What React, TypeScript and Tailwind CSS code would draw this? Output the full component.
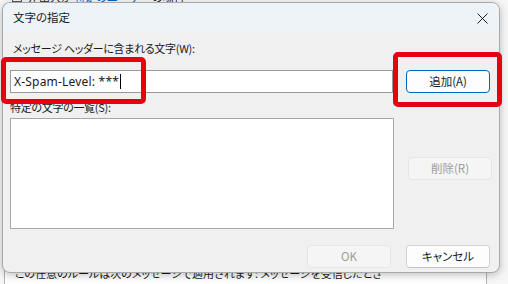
import React from 'react';

const font = "font-['Noto_Sans_CJK_JP','Noto_Sans',sans-serif] [font-feature-settings:'palt']";

const Button = ({ label, kind = 'normal' }: { label: string; kind?: 'normal' | 'default' | 'disabled' }) => {
    const look =
        kind === 'default'
            ? 'bg-[#fdfdfd] border-[#0067c0] text-[#1a1a1a]'
            : kind === 'disabled'
            ? 'bg-[#f5f5f5] border-[#e6e6e6] text-[#9d9d9d]'
            : 'bg-[#fdfdfd] border-[#d4d4d4] border-b-[#c2c2c2] text-[#1a1a1a]';
    return (
        <div className={`w-[84px] h-[23px] flex items-center justify-center rounded-[4px] border text-[11.5px] ${look}`}>
            {label}
        </div>
    );
};

const App = () => {
    return (
        <div className={`relative w-[508px] h-[284px] overflow-hidden bg-[#f7f7f7] ${font}`}>
            {/* window behind the dialog */}
            <div className="absolute inset-0 flex flex-col">
                <div className="h-[4px] overflow-hidden relative">
                    <div className="absolute -top-[10px] left-[12px] flex items-center gap-[6px] text-[11px] text-[#1a1a1a] leading-[14px]">
                        <span className="w-[10px] h-[10px] border border-[#555]" />
                        <span>差出人が <span className="text-[#0066cc] underline">特定のユーザー</span> の場合</span>
                    </div>
                </div>
                <div className="flex-1 mx-[4px] mr-[21px] bg-white border-x border-[#b4b4b4]" />
                <div className="absolute left-[15px] top-[265px] text-[11px] leading-[16px] text-[#1a1a1a] whitespace-nowrap">
                    この任意のルールは次のメッセージで適用されます: メッセージを受信したとき
                </div>
            </div>

            {/* dialog */}
            <div className="absolute left-[2px] top-[2px] w-[498px] h-[271px] rounded-[8px] border border-[#a9a9a9] bg-[#f0f0f0] shadow-[0_2px_8px_rgba(0,0,0,0.25)] overflow-hidden flex flex-col text-[#1a1a1a]">
                <div className="h-[30px] bg-[#eef3f8] flex items-center justify-between pl-[10px] pr-[11px]">
                    <span className="text-[11.5px]">文字の指定</span>
                    <svg width="11" height="11" viewBox="0 0 11 11">
                        <path d="M0.5 0.5 L10.5 10.5 M10.5 0.5 L0.5 10.5" stroke="#1a1a1a" strokeWidth="1" />
                    </svg>
                </div>

                <div className="flex-1 flex flex-col pl-[7px] pr-[9px]">
                    <div className="mt-[7px] ml-[3px] text-[11px] leading-[16px] tracking-[-0.3px]">メッセージ ヘッダーに含まれる文字(W):</div>

                    <div className="mt-[14px] flex items-center gap-[13px]">
                        <div className="w-[384px] h-[23px] bg-white border border-[#9a9a9a] flex items-center pl-[3px] text-[12px]">
                            <span className="font-['Noto_Sans',sans-serif] tracking-[0.2px]">X-Spam-Level: ***</span>
                            <span className="ml-[1px] w-px h-[15px] bg-black" />
                        </div>
                        <Button label="追加(A)" kind="default" />
                    </div>

                    <div className="flex gap-[14px]">
                        <div className="flex flex-col">
                            <div className="mt-[6px] text-[11px] leading-[16px] tracking-[-0.3px]">特定の文字の一覧(S):</div>
                            <div className="mt-[3px] w-[384px] h-[111px] bg-white border border-[#a8a8a8]" />
                        </div>
                        <div className="mt-[64px]">
                            <Button label="削除(R)" kind="disabled" />
                        </div>
                    </div>

                    <div className="mt-[16px] flex justify-end gap-[15px]">
                        <Button label="OK" kind="disabled" />
                        <Button label="キャンセル" />
                    </div>
                </div>
            </div>

            {/* annotation boxes */}
            <div className="absolute left-[1px] top-[57px] w-[145px] h-[47px] rounded-[5px] border-[5px] border-[#e60012]" />
            <div className="absolute left-[393px] top-[52px] w-[109px] h-[55px] rounded-[5px] border-[5px] border-[#e60012]" />
        </div>
    );
};

export default App;
